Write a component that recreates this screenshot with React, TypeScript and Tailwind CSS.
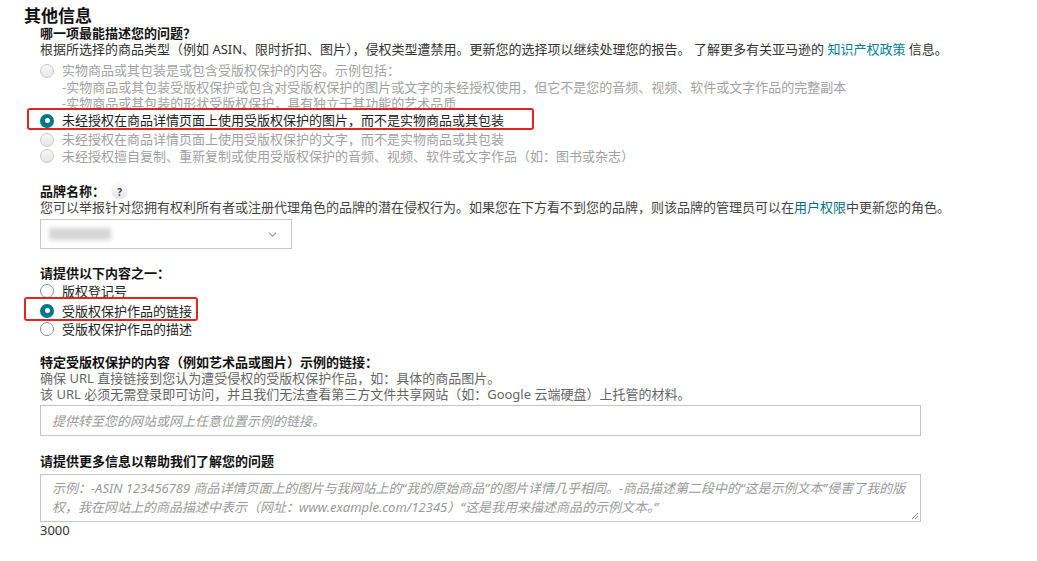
import { ChevronDown } from "lucide-react";

type RadioState = "checked" | "disabled" | "empty";

function Radio({ state }: { state: RadioState }) {
  if (state === "checked") {
    return (
      <span className="flex h-[14px] w-[14px] shrink-0 items-center justify-center rounded-full bg-[#00788c]">
        <span className="h-[5px] w-[5px] rounded-full bg-white" />
      </span>
    );
  }
  if (state === "disabled") {
    return (
      <span className="h-[14px] w-[14px] shrink-0 rounded-full border border-[#c9c9c9] bg-gradient-to-b from-[#f7f7f7] to-[#e6e6e6]" />
    );
  }
  return (
    <span className="h-[14px] w-[14px] shrink-0 rounded-full border border-[#7b97a5] bg-white" />
  );
}

function RadioRow({
  state,
  children,
  className = "",
}: {
  state: RadioState;
  children: React.ReactNode;
  className?: string;
}) {
  return (
    <div className={`flex items-start gap-[8px] ${className}`}>
      <span className="mt-[1.5px] flex">
        <Radio state={state} />
      </span>
      <div
        className={
          state === "disabled" ? "text-[#a2a2a2]" : "text-[#222]"
        }
      >
        {children}
      </div>
    </div>
  );
}

// annotation box drawn on top of a row
function RedBox({ className }: { className: string }) {
  return (
    <div
      className={`pointer-events-none absolute rounded-[3px] border-2 border-[#e0261f] ${className}`}
    />
  );
}

export default function App() {
  return (
    <div className="min-h-screen bg-white pl-[24px] pt-[6px] font-['Noto_Sans','Noto_Sans_CJK_SC',sans-serif] text-[13px] text-[#333]">
      <h2 className="text-[17px] font-bold leading-[19px] text-[#111]">
        其他信息
      </h2>

      <div className="pl-[16px]">
        {/* question 1 */}
        <p className="text-[13px] font-bold leading-[16px] text-[#111]">
          哪一项最能描述您的问题？
        </p>
        <p className="leading-[16px] text-[#333]">
          根据所选择的商品类型（例如 ASIN、限时折扣、图片），侵权类型遭禁用。更新您的选择项以继续处理您的报告。
          了解更多有关亚马逊的{" "}
          <a className="text-[#008296]">知识产权政策</a> 信息。
        </p>

        <div className="mt-[5px] leading-[16.5px]">
          <RadioRow state="disabled">
            <div>实物商品或其包装是或包含受版权保护的内容。示例包括：</div>
            <div>
              -实物商品或其包装受版权保护或包含对受版权保护的图片或文字的未经授权使用，但它不是您的音频、视频、软件或文字作品的完整副本
            </div>
            <div>-实物商品或其包装的形状受版权保护，具有独立于其功能的艺术品质</div>
          </RadioRow>
          <div className="relative mt-[0.5px]">
            <RadioRow state="checked">
              未经授权在商品详情页面上使用受版权保护的图片，而不是实物商品或其包装
            </RadioRow>
            <RedBox className="left-[-13px] top-[-4px] h-[22px] w-[507px]" />
          </div>
          <RadioRow state="disabled" className="mt-[2.5px]">
            未经授权在商品详情页面上使用受版权保护的文字，而不是实物商品或其包装
          </RadioRow>
          <RadioRow state="disabled">
            未经授权擅自复制、重新复制或使用受版权保护的音频、视频、软件或文字作品（如：图书或杂志）
          </RadioRow>
        </div>

        {/* brand */}
        <div className="mt-[20px] flex h-[15px] items-center gap-[7px]">
          <span className="text-[13px] font-bold leading-[15px] text-[#111]">
            品牌名称：
          </span>
          <span className="flex h-[15px] w-[15px] items-center justify-center rounded-full bg-gradient-to-b from-[#fafafa] to-[#e4e4e4] text-[10px] font-bold leading-none text-[#444] shadow-[0_0_1px_rgba(0,0,0,0.35)]">
            ?
          </span>
        </div>
        <p className="mt-[1px] leading-[15px] text-[#444]">
          您可以举报针对您拥有权利所有者或注册代理角色的品牌的潜在侵权行为。如果您在下方看不到您的品牌，则该品牌的管理员可以在
          <a className="text-[#007185]">用户权限</a>中更新您的角色。
        </p>
        <div className="mt-[4px] flex h-[30px] w-[252px] items-center justify-between border border-[#c6c6c6] bg-white pl-[8px] pr-[12px]">
          <div className="h-[12px] w-[62px] bg-[#d6d6d6] blur-[2px]" />
          <ChevronDown className="h-[13px] w-[13px] text-[#9a9a9a]" strokeWidth={2} />
        </div>

        {/* one of the following */}
        <p className="mt-[16px] text-[13px] font-bold leading-[17px] text-[#111]">
          请提供以下内容之一：
        </p>
        <div className="leading-[18px]">
          <RadioRow state="empty">版权登记号</RadioRow>
          <div className="relative mt-[2px]">
            <RadioRow state="checked">受版权保护作品的链接</RadioRow>
            <RedBox className="left-[-16px] top-[-5px] h-[24px] w-[174px]" />
          </div>
          <RadioRow state="empty">受版权保护作品的描述</RadioRow>
        </div>

        {/* link */}
        <p className="mt-[16px] text-[13px] font-bold leading-[16px] text-[#111]">
          特定受版权保护的内容（例如艺术品或图片）示例的链接：
        </p>
        <p className="leading-[16px] text-[#666]">
          确保 URL 直接链接到您认为遭受侵权的受版权保护作品，如：具体的商品图片。
        </p>
        <p className="leading-[17px] text-[#666]">
          该 URL 必须无需登录即可访问，并且我们无法查看第三方文件共享网站（如：Google 云端硬盘）上托管的材料。
        </p>
        <input
          type="text"
          placeholder="提供转至您的网站或网上任意位置示例的链接。"
          className="mt-[2px] block h-[31px] w-[881px] border border-[#c4c4c4] bg-white px-[11px] text-[13px] italic outline-none placeholder:text-[#9a9a9a]"
        />

        {/* more info */}
        <p className="mt-[17px] text-[13px] font-bold leading-[17px] text-[#111]">
          请提供更多信息以帮助我们了解您的问题
        </p>
        <div className="relative mt-[4px] h-[48px] w-[881px] border border-[#c4c4c4] bg-white px-[11px] pt-[4px] text-[13px] italic leading-[19px] text-[#9a9a9a]">
          <div className="whitespace-nowrap">
            示例：-ASIN 123456789 商品详情页面上的图片与我网站上的“我的原始商品”的图片详情几乎相同。-商品描述第二段中的“这是示例文本”侵害了我的版
          </div>
          <div className="whitespace-nowrap">
            权，我在网站上的商品描述中表示（网址：www.example.com/12345）“这是我用来描述商品的示例文本。”
          </div>
          <svg
            className="absolute bottom-[1px] right-[1px]"
            width="9"
            height="9"
            viewBox="0 0 9 9"
          >
            <path d="M8 2 L2 8 M8 5 L5 8" stroke="#8a8a8a" strokeWidth="1" />
          </svg>
        </div>
        <p className="leading-[17px] text-[#333]">3000</p>
      </div>
    </div>
  );
}
